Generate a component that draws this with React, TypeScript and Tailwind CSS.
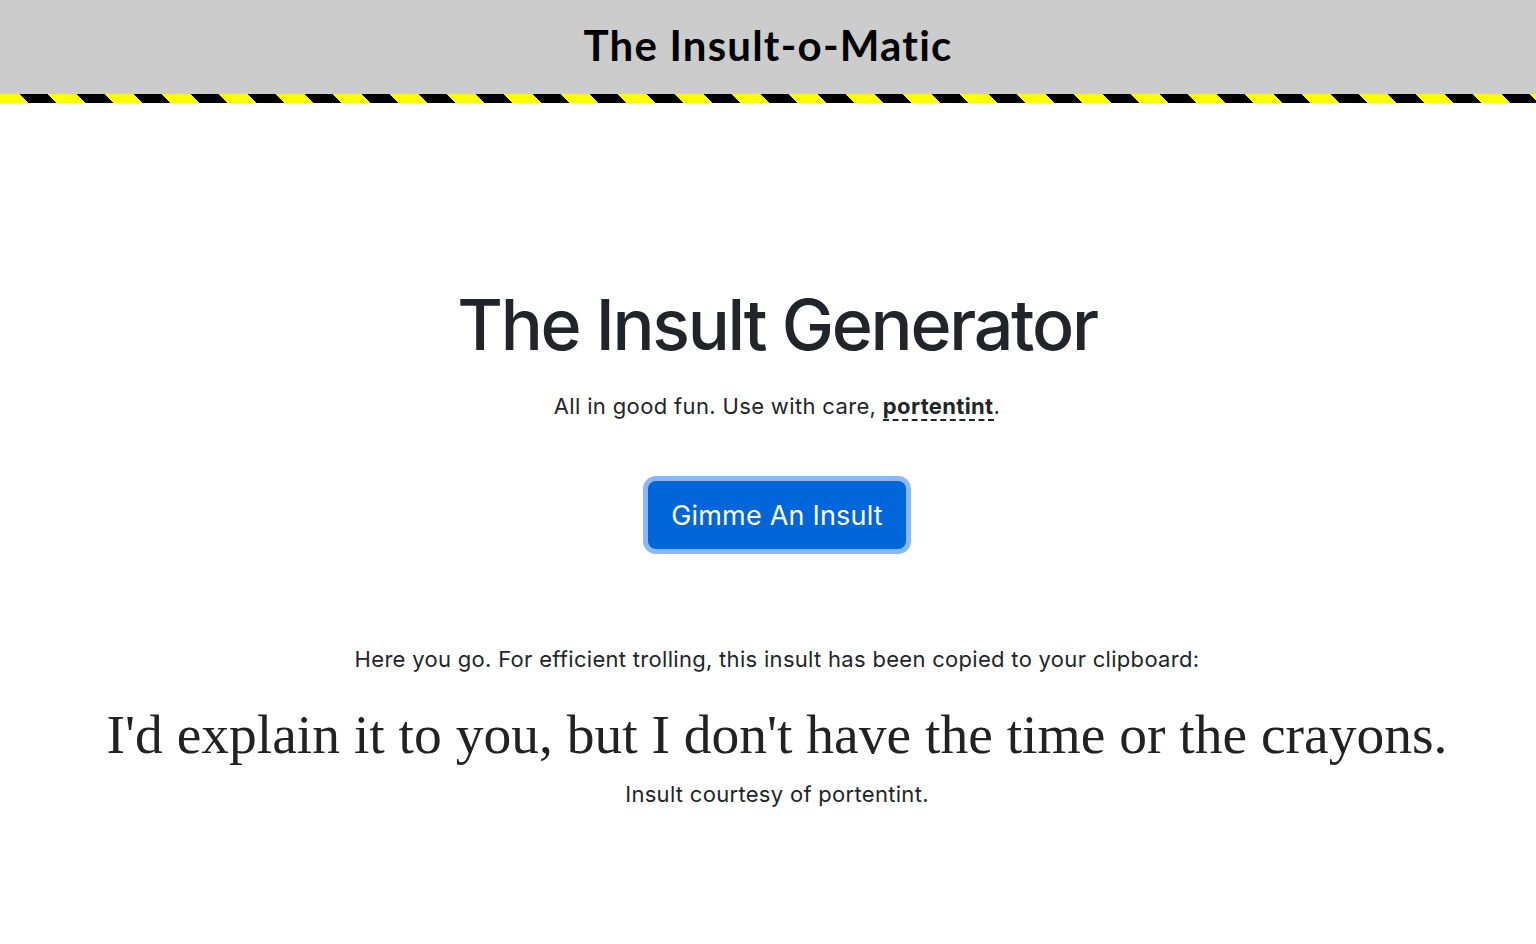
import React from "react";

const App: React.FC = () => {
  return (
    <div className="min-h-screen bg-white text-[#212529] font-['Inter','Liberation_Sans',sans-serif]">
      {/* Header */}
      <header className="bg-[#cccccc]">
        <div className="h-[94px] flex items-center justify-center pb-[4px]">
          <h1 className="text-[42px] font-bold text-black font-['Lato','Noto_Sans',sans-serif] tracking-[1.2px]">
            The Insult-o-Matic
          </h1>
        </div>
        <div className="h-[9px] bg-[repeating-linear-gradient(45deg,#ffff00_0px,#ffff00_20px,#000000_20px,#000000_40.3px)]" />
      </header>

      {/* Main */}
      <main className="flex flex-col items-center text-center pt-[187px] pl-[18px]">
        <h2 className="text-[70px] font-medium leading-none tracking-[-2.3px]">The Insult Generator</h2>
        <p className="mt-[32px] text-[22px] leading-[28px] tracking-[0.35px]">
          All in good fun. Use with care,{" "}
          <abbr
            title="portentint"
            className="font-bold no-underline border-b-2 border-dashed border-[#212529] cursor-help"
          >
            portentint
          </abbr>
          .
        </p>

        <button className="mt-[61px] rounded-[8px] bg-[#0066d9] text-white text-[27px] tracking-[0.2px] h-[68px] w-[258px] flex items-center justify-center pt-[3px] ring-[5px] ring-[#8ab8f8]">
          Gimme An Insult
        </button>

        <p className="mt-[96px] text-[22px] leading-[28px] tracking-[0.3px]">
          Here you go. For efficient trolling, this insult has been copied to your clipboard:
        </p>
        <blockquote className="mt-[30px] text-[55.5px] leading-[64px] font-['Liberation_Serif',serif] text-[#222]">
          I'd explain it to you, but I don't have the time or the crayons.
        </blockquote>
        <p className="mt-[13px] text-[22px] leading-[28px] tracking-[0.3px]">Insult courtesy of portentint.</p>
      </main>
    </div>
  );
};

export default App;
